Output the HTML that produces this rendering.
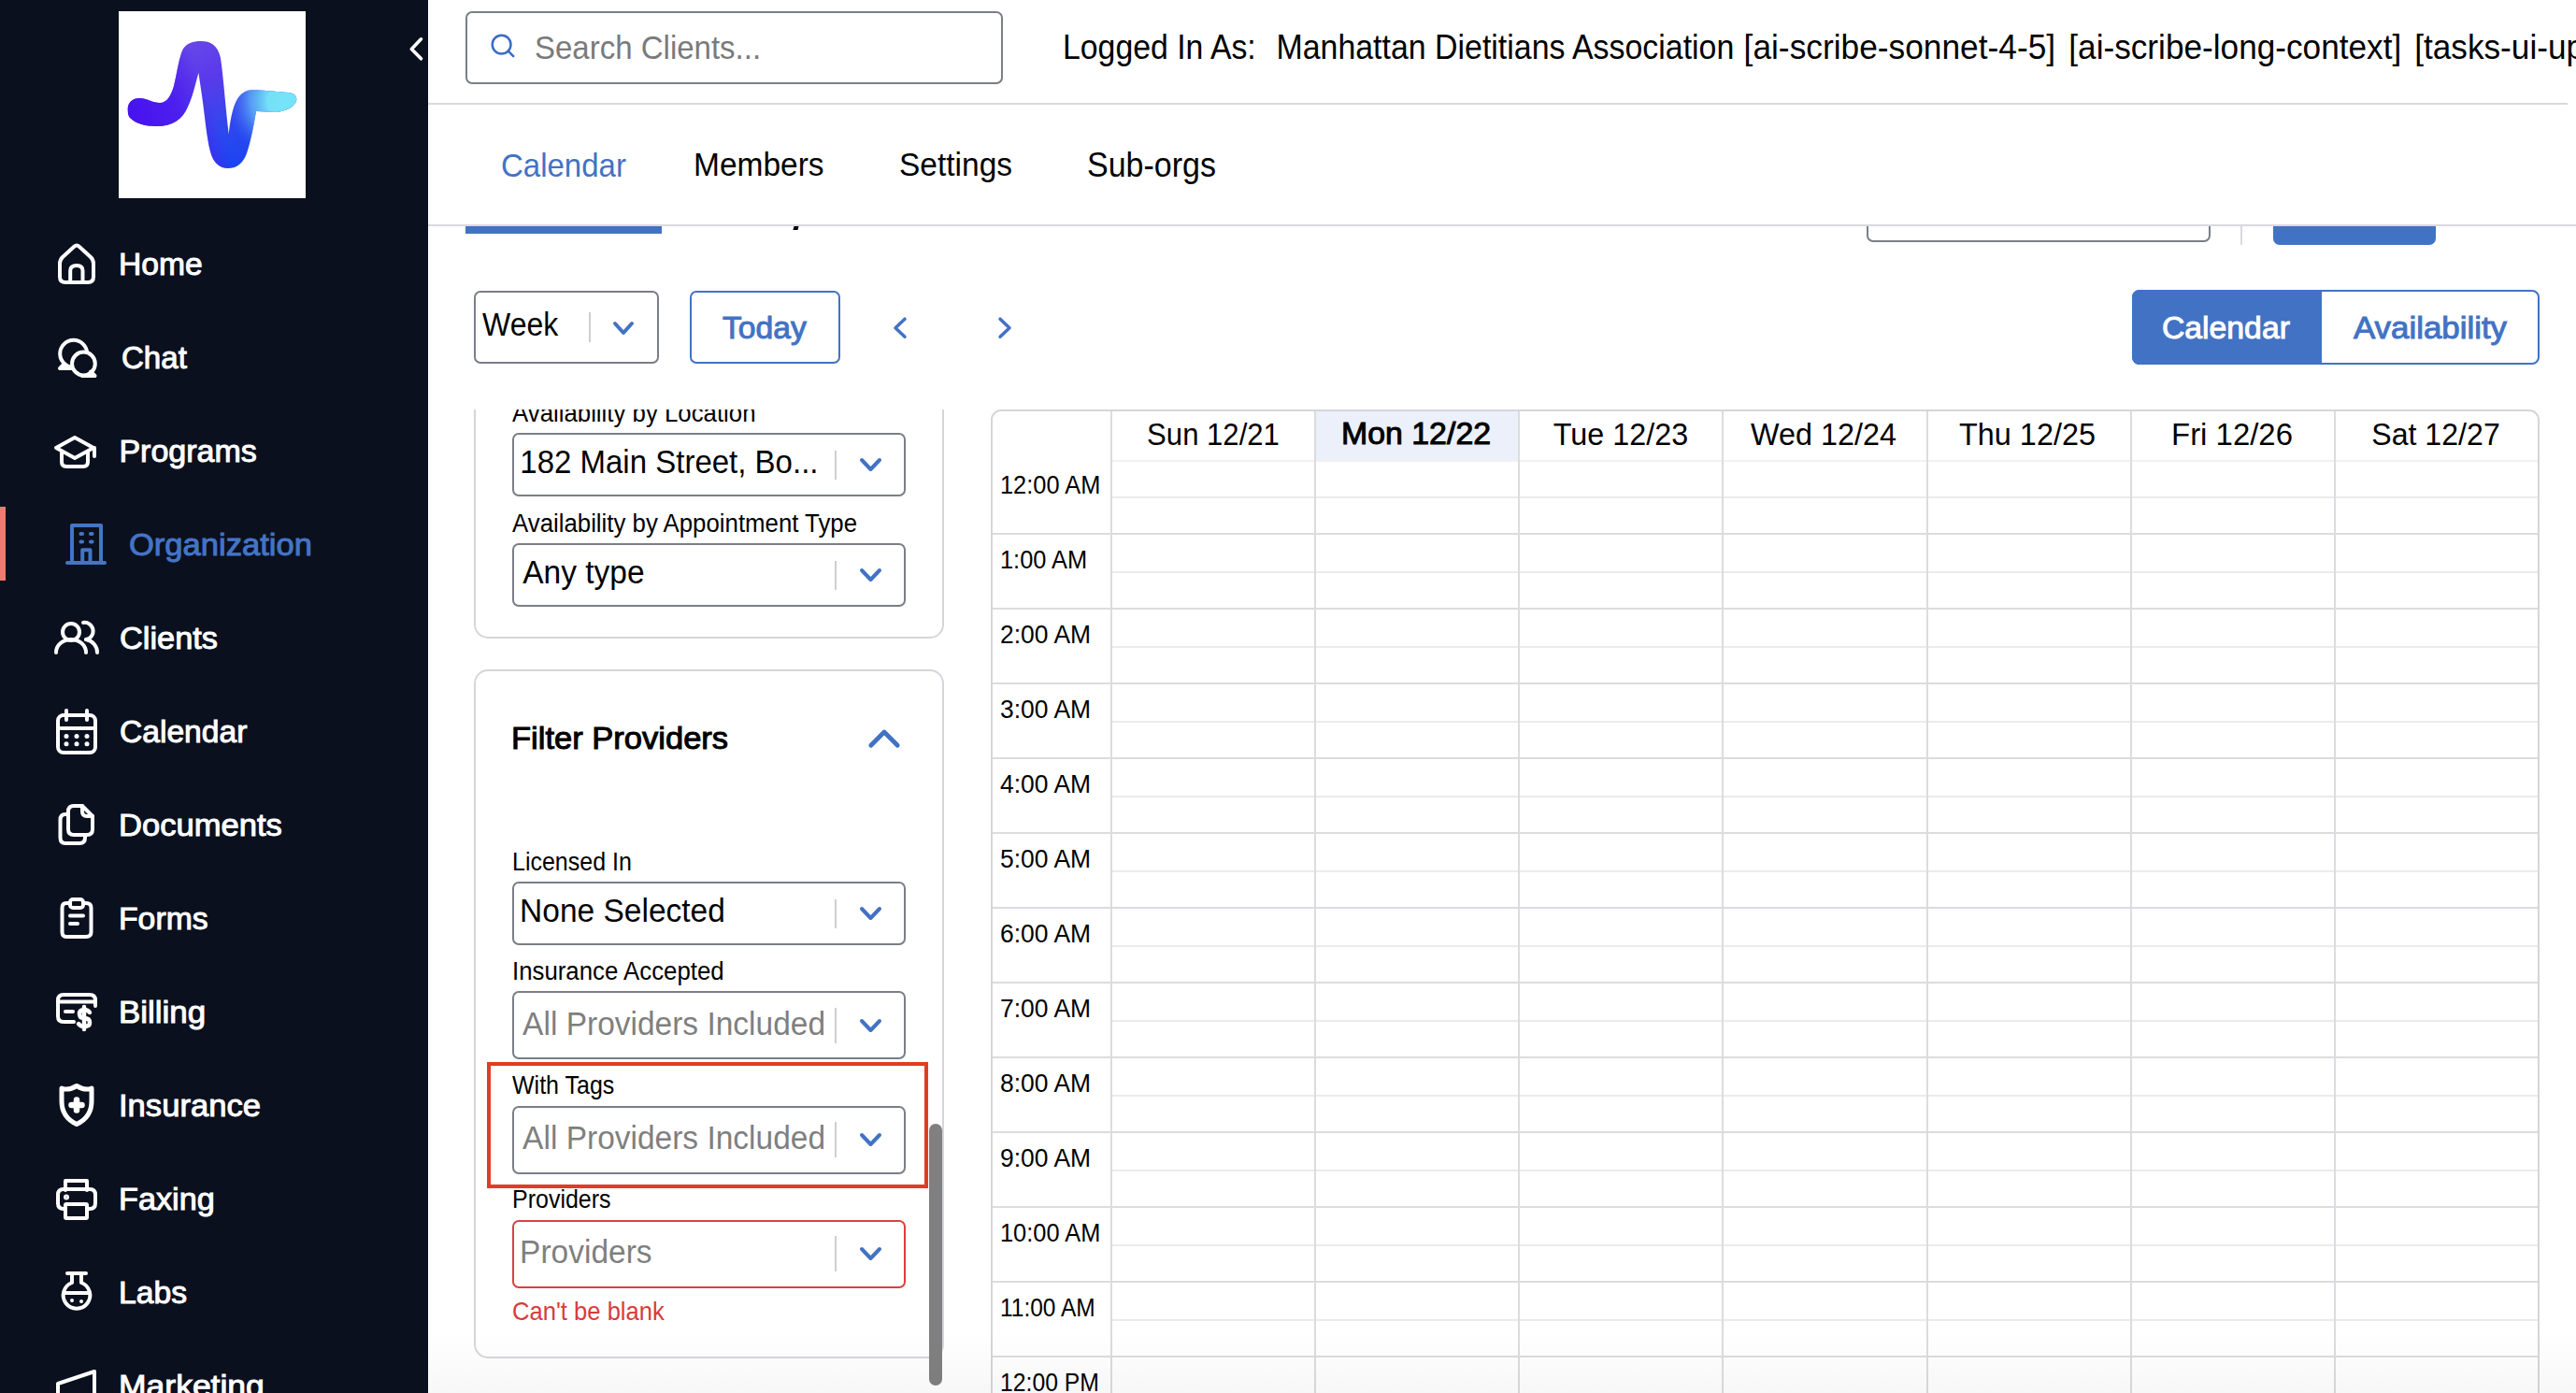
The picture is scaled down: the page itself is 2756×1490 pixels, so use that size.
<!DOCTYPE html>
<html><head><meta charset="utf-8"><style>
html,body{margin:0;padding:0;width:2756px;height:1490px;overflow:hidden;background:#fff;font-family:"Liberation Sans", sans-serif;}
.r{position:absolute;}
.t{position:absolute;line-height:0;white-space:nowrap;transform-origin:0 0;}
</style></head><body>
<div class="r" style="left:0px;top:0px;width:458px;height:1490px;background:#0a101e"></div><div class="r" style="left:127px;top:12px;width:200px;height:200px;background:#fff"></div><svg class="r" style="left:127px;top:12px" width="200" height="200" viewBox="0 0 200 200">
<defs>
<linearGradient id="lg1" gradientUnits="userSpaceOnUse" x1="60" y1="30" x2="120" y2="165">
<stop offset="0" stop-color="#6a4ae8"/><stop offset="0.35" stop-color="#5a3aea"/><stop offset="0.75" stop-color="#2d48ee"/><stop offset="1" stop-color="#1c44f0"/>
</linearGradient>
<linearGradient id="lg0" gradientUnits="userSpaceOnUse" x1="10" y1="110" x2="90" y2="80">
<stop offset="0" stop-color="#4612ee"/><stop offset="0.6" stop-color="#4c1cee" stop-opacity="0.9"/><stop offset="1" stop-color="#4c1cee" stop-opacity="0"/>
</linearGradient>
<radialGradient id="lg2" gradientUnits="userSpaceOnUse" cx="178" cy="96" r="62">
<stop offset="0" stop-color="#76e4f8"/><stop offset="0.3" stop-color="#74e0f8"/><stop offset="0.6" stop-color="#5aaaf6" stop-opacity="0.85"/><stop offset="1" stop-color="#3a6af2" stop-opacity="0"/>
</radialGradient>

</defs>
<path d="M9.8,106 C9,98 15,93 22,93 C30,93 36,98 44,98 C52,98 56,90 59,80 C62,68 64,52 68,42 C72,34 80,32 88,32 C98,32 106,36 109,50 C112,70 114,100 117.7,131 C120,110 124,96 130,90 C134,86 138,84 146,84 C158,85 172,86 182,87 C190,88 191,93 190,96 C188,102 180,107 168,108 L147,107 C144,125 141,140 137,152 C132,165 124,168 117,168 C108,168 101,162 98,150 C94,135 92,110 89,90 L85.4,66 C82,78 79,92 74,102 C68,116 58,123 40,123 C28,123 18,120 12,114 C10,111 9.8,109 9.8,106 Z" fill="url(#lg1)"/><path d="M9.8,106 C9,98 15,93 22,93 C30,93 36,98 44,98 C52,98 56,90 59,80 C62,68 64,52 68,42 C72,34 80,32 88,32 C98,32 106,36 109,50 C112,70 114,100 117.7,131 C120,110 124,96 130,90 C134,86 138,84 146,84 C158,85 172,86 182,87 C190,88 191,93 190,96 C188,102 180,107 168,108 L147,107 C144,125 141,140 137,152 C132,165 124,168 117,168 C108,168 101,162 98,150 C94,135 92,110 89,90 L85.4,66 C82,78 79,92 74,102 C68,116 58,123 40,123 C28,123 18,120 12,114 C10,111 9.8,109 9.8,106 Z" fill="url(#lg0)"/><path d="M9.8,106 C9,98 15,93 22,93 C30,93 36,98 44,98 C52,98 56,90 59,80 C62,68 64,52 68,42 C72,34 80,32 88,32 C98,32 106,36 109,50 C112,70 114,100 117.7,131 C120,110 124,96 130,90 C134,86 138,84 146,84 C158,85 172,86 182,87 C190,88 191,93 190,96 C188,102 180,107 168,108 L147,107 C144,125 141,140 137,152 C132,165 124,168 117,168 C108,168 101,162 98,150 C94,135 92,110 89,90 L85.4,66 C82,78 79,92 74,102 C68,116 58,123 40,123 C28,123 18,120 12,114 C10,111 9.8,109 9.8,106 Z" fill="url(#lg2)"/>
</svg><svg class="r" style="left:436px;top:38px" width="20" height="30" viewBox="0 0 20 30"><path d="M14.5,3.8 L4.3,14.4 L14.5,24.8" fill="none" stroke="#fff" stroke-width="3.6" stroke-linecap="round" stroke-linejoin="round"/></svg><div class="t " style="left:127.4px;top:282.2px;font-size:34px;color:#fff;font-weight:400;transform:scale(0.989,1.0);transform-origin:0 11.78px;-webkit-text-stroke:1.0px #fff;">Home</div><div class="t " style="left:130.2px;top:381.6px;font-size:34px;color:#fff;font-weight:400;transform:scale(0.972,1.0);transform-origin:0 11.78px;-webkit-text-stroke:1.0px #fff;">Chat</div><div class="t " style="left:127.4px;top:482.0px;font-size:34px;color:#fff;font-weight:400;transform:scale(1.0,1.0);transform-origin:0 11.78px;-webkit-text-stroke:1.0px #fff;">Programs</div><div class="t " style="left:138.2px;top:581.6px;font-size:34px;color:#4474c6;font-weight:400;transform:scale(1.016,1.0);transform-origin:0 11.78px;-webkit-text-stroke:1.0px #4474c6;">Organization</div><div class="t " style="left:128.2px;top:681.6px;font-size:34px;color:#fff;font-weight:400;transform:scale(1.01,1.0);transform-origin:0 11.78px;-webkit-text-stroke:1.0px #fff;">Clients</div><div class="t " style="left:128.2px;top:782.2px;font-size:34px;color:#fff;font-weight:400;transform:scale(0.988,1.0);transform-origin:0 11.78px;-webkit-text-stroke:1.0px #fff;">Calendar</div><div class="t " style="left:127.4px;top:881.6px;font-size:34px;color:#fff;font-weight:400;transform:scale(1.017,1.0);transform-origin:0 11.78px;-webkit-text-stroke:1.0px #fff;">Documents</div><div class="t " style="left:127.4px;top:981.6px;font-size:34px;color:#fff;font-weight:400;transform:scale(0.993,1.0);transform-origin:0 11.78px;-webkit-text-stroke:1.0px #fff;">Forms</div><div class="t " style="left:127.4px;top:1081.6px;font-size:34px;color:#fff;font-weight:400;transform:scale(1.027,1.0);transform-origin:0 11.78px;-webkit-text-stroke:1.0px #fff;">Billing</div><div class="t " style="left:127.4px;top:1181.6px;font-size:34px;color:#fff;font-weight:400;transform:scale(1.018,1.0);transform-origin:0 11.78px;-webkit-text-stroke:1.0px #fff;">Insurance</div><div class="t " style="left:127.4px;top:1282.2px;font-size:34px;color:#fff;font-weight:400;transform:scale(1.007,1.0);transform-origin:0 11.78px;-webkit-text-stroke:1.0px #fff;">Faxing</div><div class="t " style="left:127.4px;top:1381.6px;font-size:34px;color:#fff;font-weight:400;transform:scale(0.99,1.0);transform-origin:0 11.78px;-webkit-text-stroke:1.0px #fff;">Labs</div><div class="t " style="left:127.4px;top:1481.6px;font-size:34px;color:#fff;font-weight:400;transform:scale(1.044,1.0);transform-origin:0 11.78px;-webkit-text-stroke:1.0px #fff;">Marketing</div><div class="r" style="left:0px;top:542px;width:6px;height:79px;background:#ef7a6d"></div><svg class="r" style="left:0;top:0" width="458" height="1490" viewBox="0 0 458 1490" fill="none" stroke="#fff" stroke-width="4" stroke-linecap="round" stroke-linejoin="round">
<!-- home -->
<path d="M64,282 L64,296 Q64,302 70,302 L94,302 Q100,302 100,296 L100,282 Q100,278 97,275 L85,264 Q82,261 79,264 L67,275 Q64,278 64,282 Z"/>
<path d="M75.2,302 L75.2,289.5 Q75.2,284 82,284 Q88.5,284 88.5,289.5 L88.5,302"/>
<!-- chat -->
<circle cx="78.7" cy="378.3" r="14.5"/><path d="M69,389 L64,394 L76,394"/>
<circle cx="89.4" cy="389" r="12.4" fill="#0a101e"/><path d="M97,397.5 L101.5,402 L88,402"/>
<!-- programs -->
<path d="M60,479 L80,468 L100,479 L80,490 Z"/><path d="M66,483 L66,494 Q66,499 71,499 L89,499 Q94,499 94,494 L94,483"/><path d="M101,479 L101,488"/>
<!-- organization -->
<g stroke="#4474c6"><path d="M77,602 L77,562 L108,562 L108,602"/><path d="M72,602 L112,602"/><path d="M88.2,602 L88.2,588.2 L96.5,588.2 L96.5,602"/>
<path d="M86.5,571 L88,571 M97,571 L98.5,571 M86.5,579.5 L88,579.5 M97,579.5 L98.5,579.5" stroke-width="4.2"/></g>
<!-- clients -->
<circle cx="76" cy="676" r="9"/><path d="M60,698 A16,14 0 0 1 92,698"/><path d="M89,666 A9,9 0 0 1 92,684"/><path d="M92,684 A15,14 0 0 1 104,698"/>
<!-- calendar -->
<rect x="62" y="765" width="40" height="40" rx="6"/><path d="M62,779 L102,779 M71,760 L71,770 M93,760 L93,770"/>
<g fill="#fff" stroke="none"><circle cx="71" cy="787.5" r="2.5"/><circle cx="82" cy="787.5" r="2.5"/><circle cx="93" cy="787.5" r="2.5"/><circle cx="71" cy="795.8" r="2.5"/><circle cx="82" cy="795.8" r="2.5"/><circle cx="93" cy="795.8" r="2.5"/></g>
<!-- documents -->
<path d="M73,871 L70,871 Q64.5,871 64.5,877 L64.5,896 Q64.5,902 70,902 L85,902 Q91,902 91,896 L91,893"/>
<path d="M73,868 Q73,862 79,862 L88,862 L99,873 L99,887 Q99,893 93,893 L79,893 Q73,893 73,887 Z"/><path d="M88,862 L88,868 Q88,873 93,873 L99,873"/>
<!-- forms -->
<path d="M74,966 L71,966 Q66.5,966 66.5,971 L66.5,997 Q66.5,1002 71,1002 L92,1002 Q97.5,1002 97.5,997 L97.5,971 Q97.5,966 92,966 L89,966"/>
<rect x="75" y="962" width="14" height="9" rx="3"/><path d="M75,979.5 L89,979.5 M75,988 L83,988"/>
<!-- billing -->
<path d="M79,1093 L68,1093 Q62,1093 62,1087 L62,1070 Q62,1064 68,1064 L96,1064 Q102,1064 102,1070 L102,1076"/><path d="M62,1071.5 L102,1071.5"/><path d="M70,1082 L78,1082"/>
<path d="M96,1083 Q94,1080 90,1080 Q85,1080 85,1084.5 Q85,1089 90,1089 Q96,1089 96,1094 Q96,1098 90,1098 Q86,1098 84,1095 M90,1077 L90,1101" stroke-width="4.5"/>
<!-- insurance -->
<path d="M82,1161.5 Q73,1167 66,1164 L66,1178 Q66,1195 82,1202.5 Q98,1195 98,1178 L98,1164 Q91,1167 82,1161.5 Z" stroke-width="5"/>
<path d="M82,1176.5 L82,1187.5 M76.5,1182 L87.5,1182" stroke-width="6.5"/>
<!-- faxing -->
<path d="M70,1273 L70,1263 L93,1263 L93,1273"/><path d="M70,1293 L68,1293 Q62,1293 62,1287 L62,1278 Q62,1272 68,1272 L96,1272 Q102,1272 102,1278 L102,1287 Q102,1293 96,1293 L93,1293"/>
<rect x="70" y="1288" width="23" height="15" rx="1"/><circle cx="71" cy="1280.6" r="1" fill="#fff"/>
<!-- labs -->
<path d="M72,1362 L92,1362 M77,1362 L77,1372 A14.3,14.3 0 1 0 87,1372 L87,1362"/><path d="M69,1383 L95,1383"/>
<circle cx="77" cy="1391" r="2" fill="#fff" stroke="none"/><circle cx="87" cy="1392" r="2" fill="#fff" stroke="none"/>
<!-- marketing -->
<path d="M62,1490 L62,1480 L101,1467 L101,1490"/>
</svg><div class="r" style="left:458px;top:110px;width:2289px;height:2px;background:#d9d9de"></div><div class="r" style="left:498px;top:12px;width:575px;height:78px;border:2px solid #7b7e86;border-radius:7px;box-sizing:border-box"></div><svg class="r" style="left:520px;top:32px" width="36" height="36" viewBox="0 0 36 36" fill="none" stroke="#3a6cc6" stroke-width="2.5" stroke-linecap="round"><circle cx="16.6" cy="15.6" r="9.9"/><path d="M23.8,22.6 L29.2,28.2"/></svg><div class="t " style="left:572px;top:51.5px;font-size:33px;color:#7a7a7a;font-weight:400;transform:scale(1,1.07);transform-origin:0 11.43px;">Search Clients...</div><div class="t " style="left:1137px;top:51.2px;font-size:33.8px;color:#000;font-weight:400;transform:scale(1,1.07);transform-origin:0 11.71px;">Logged In As:</div><div class="t " style="left:1365.5px;top:51.2px;font-size:33.9px;color:#000;font-weight:400;transform:scale(1,1.07);transform-origin:0 11.75px;">Manhattan Dietitians Association</div><div class="t " style="left:1865.6px;top:50.7px;font-size:35.3px;color:#000;font-weight:400;transform:scale(1,1.07);transform-origin:0 12.23px;">[ai-scribe-sonnet-4-5]</div><div class="t " style="left:2213.3px;top:50.7px;font-size:35.2px;color:#000;font-weight:400;transform:scale(1,1.07);transform-origin:0 12.20px;">[ai-scribe-long-context]</div><div class="t " style="left:2583.2px;top:50.7px;font-size:35.2px;color:#000;font-weight:400;transform:scale(1,1.07);transform-origin:0 12.20px;">[tasks-ui-updates]</div><div class="t " style="left:536px;top:177.6px;font-size:33px;color:#4272c4;font-weight:400;transform:scale(1,1.07);transform-origin:0 11.43px;">Calendar</div><div class="t " style="left:742px;top:177.4px;font-size:33.5px;color:#000;font-weight:400;transform:scale(1,1.07);transform-origin:0 11.61px;">Members</div><div class="t " style="left:962px;top:177.4px;font-size:33.5px;color:#000;font-weight:400;transform:scale(1,1.07);transform-origin:0 11.61px;">Settings</div><div class="t " style="left:1163px;top:177.2px;font-size:34px;color:#000;font-weight:400;transform:scale(1,1.07);transform-origin:0 11.78px;">Sub-orgs</div><div class="r" style="left:458px;top:240px;width:2298px;height:2px;background:#d9d9de"></div><div class="r" style="left:458px;top:242px;width:2298px;height:60px;overflow:hidden"><div class="r" style="left:40px;top:0px;width:210px;height:8px;background:#4272c4"></div><div class="r" style="left:391px;top:0px;width:5px;height:4px;background:#000;transform:skewX(-15deg)"></div><div class="r" style="left:1539px;top:-40px;width:368px;height:57px;border:2px solid #7b7e86;border-radius:7px;box-sizing:border-box"></div><div class="r" style="left:1939px;top:0px;width:2px;height:20px;background:#d9d9de"></div><div class="r" style="left:1974px;top:-40px;width:174px;height:60px;background:#4272c4;border-radius:7px"></div></div><div class="r" style="left:507px;top:311px;width:198px;height:78px;border:2px solid #7b7e86;border-radius:7px;box-sizing:border-box"></div><div class="t " style="left:516px;top:347.7px;font-size:32px;color:#000;font-weight:400;transform:scale(1,1.07);transform-origin:0 11.09px;">Week</div><div class="r" style="left:630px;top:334px;width:2px;height:32px;background:#cfcfd2"></div><svg class="r" style="left:653px;top:341px" width="28" height="20" viewBox="0 0 28 20"><path d="M5.0,5.0 L14.0,15.0 L23.0,5.0" fill="none" stroke="#4272c4" stroke-width="4" stroke-linecap="round" stroke-linejoin="round"/></svg><div class="r" style="left:738px;top:311px;width:161px;height:78px;border:2px solid #4272c4;border-radius:7px;box-sizing:border-box"></div><div class="t " style="left:773px;top:350.0px;font-size:34px;color:#4272c4;font-weight:400;transform:scale(0.99,1.0);transform-origin:0 11.78px;-webkit-text-stroke:1.0px #4272c4;">Today</div><svg class="r" style="left:950px;top:334px" width="26" height="34" viewBox="0 0 26 34"><path d="M18,7.2 L8,16.7 L18,26.2" fill="none" stroke="#4272c4" stroke-width="3.5" stroke-linecap="round" stroke-linejoin="round"/></svg><svg class="r" style="left:1062px;top:334px" width="26" height="34" viewBox="0 0 26 34"><path d="M8,7.2 L18,16.7 L8,26.2" fill="none" stroke="#4272c4" stroke-width="3.5" stroke-linecap="round" stroke-linejoin="round"/></svg><div class="r" style="left:2281px;top:310px;width:436px;height:80px;border:2px solid #4272c4;border-radius:8px;box-sizing:border-box;overflow:hidden"></div><div class="r" style="left:2281px;top:310px;width:203px;height:80px;background:#4272c4;border-radius:8px 0 0 8px"></div><div class="t " style="left:2313.3px;top:349.9px;font-size:34px;color:#fff;font-weight:400;transform:scale(0.992,1.0);transform-origin:0 11.78px;-webkit-text-stroke:1.0px #fff;">Calendar</div><div class="t " style="left:2518px;top:349.9px;font-size:34px;color:#4272c4;font-weight:400;transform:scale(1.025,1.0);transform-origin:0 11.78px;-webkit-text-stroke:1.0px #4272c4;">Availability</div><div class="r" style="left:458px;top:438px;width:582px;height:1052px;overflow:hidden"><div class="r" style="left:49px;top:-238px;width:503px;height:483px;border:2px solid #d6d6da;border-radius:15px;box-sizing:border-box"></div><div class="t " style="left:90px;top:3.5px;font-size:25.8px;color:#000;font-weight:400;transform:scale(1,1.07);transform-origin:0 8.94px;">Availability by Location</div><div class="r" style="left:90px;top:25px;width:421px;height:68px;border:2px solid #7b7e86;border-radius:7px;box-sizing:border-box;background:#fff"></div><div class="t " style="left:98.29999999999995px;top:57.4px;font-size:33px;color:#000;font-weight:400;transform:scale(1,1.07);transform-origin:0 11.43px;white-space:nowrap">182 Main Street, Bo...</div><div class="r" style="left:435px;top:43.5px;width:2px;height:31.0px;background:#cfcfd2"></div><svg class="r" style="left:458.5px;top:49.0px" width="29" height="20" viewBox="0 0 29 20"><path d="M5.0,5.0 L14.5,15.0 L24.0,5.0" fill="none" stroke="#4272c4" stroke-width="4" stroke-linecap="round" stroke-linejoin="round"/></svg><div class="t " style="left:90px;top:121.6px;font-size:25.8px;color:#000;font-weight:400;transform:scale(1,1.07);transform-origin:0 8.94px;">Availability by Appointment Type</div><div class="r" style="left:90px;top:143px;width:421px;height:68px;border:2px solid #7b7e86;border-radius:7px;box-sizing:border-box;background:#fff"></div><div class="t " style="left:101.20000000000005px;top:175.2px;font-size:33.5px;color:#000;font-weight:400;transform:scale(1,1.07);transform-origin:0 11.61px;white-space:nowrap">Any type</div><div class="r" style="left:435px;top:161.5px;width:2px;height:31.0px;background:#cfcfd2"></div><svg class="r" style="left:458.5px;top:167.0px" width="29" height="20" viewBox="0 0 29 20"><path d="M5.0,5.0 L14.5,15.0 L24.0,5.0" fill="none" stroke="#4272c4" stroke-width="4" stroke-linecap="round" stroke-linejoin="round"/></svg><div class="r" style="left:49px;top:278px;width:503px;height:737px;border:2px solid #d6d6da;border-radius:15px;box-sizing:border-box"></div><div class="t " style="left:89.29999999999995px;top:352.1px;font-size:33px;color:#000;font-weight:400;transform:scale(1.046,1.0);transform-origin:0 11.43px;-webkit-text-stroke:1.0px #000;">Filter Providers</div><svg class="r" style="left:467px;top:337px" width="42" height="30" viewBox="0 0 42 30"><path d="M6.8,22.3 L21,8 L35.2,22.3" fill="none" stroke="#4272c4" stroke-width="4.8" stroke-linecap="round" stroke-linejoin="round"/></svg><div class="t " style="left:90px;top:483.5px;font-size:25px;color:#000;font-weight:400;transform:scale(1,1.07);transform-origin:0 8.66px;">Licensed In</div><div class="r" style="left:90px;top:505px;width:421px;height:68px;border:2px solid #7b7e86;border-radius:7px;box-sizing:border-box;background:#fff"></div><div class="t " style="left:98.10000000000002px;top:537.2px;font-size:33.5px;color:#000;font-weight:400;transform:scale(1,1.07);transform-origin:0 11.61px;white-space:nowrap">None Selected</div><div class="r" style="left:435px;top:523.5px;width:2px;height:31.0px;background:#cfcfd2"></div><svg class="r" style="left:458.5px;top:529.0px" width="29" height="20" viewBox="0 0 29 20"><path d="M5.0,5.0 L14.5,15.0 L24.0,5.0" fill="none" stroke="#4272c4" stroke-width="4" stroke-linecap="round" stroke-linejoin="round"/></svg><div class="t " style="left:90px;top:601.1px;font-size:25.8px;color:#000;font-weight:400;transform:scale(1,1.07);transform-origin:0 8.94px;">Insurance Accepted</div><div class="r" style="left:90px;top:622px;width:421px;height:73px;border:2px solid #7b7e86;border-radius:7px;box-sizing:border-box;background:#fff"></div><div class="t " style="left:101.10000000000002px;top:657.7px;font-size:33.5px;color:#7f7f7f;font-weight:400;transform:scale(1,1.07);transform-origin:0 11.61px;white-space:nowrap">All Providers Included</div><div class="r" style="left:435px;top:639.5px;width:2px;height:38.0px;background:#cfcfd2"></div><svg class="r" style="left:458.5px;top:648.5px" width="29" height="20" viewBox="0 0 29 20"><path d="M5.0,5.0 L14.5,15.0 L24.0,5.0" fill="none" stroke="#4272c4" stroke-width="4" stroke-linecap="round" stroke-linejoin="round"/></svg><div class="r" style="left:63px;top:697.5px;width:472px;height:135.0px;border:4.5px solid #e23c22;box-sizing:border-box"></div><div class="t " style="left:90px;top:722.8px;font-size:25px;color:#000;font-weight:400;transform:scale(1,1.07);transform-origin:0 8.66px;">With Tags</div><div class="r" style="left:90px;top:744.5px;width:421px;height:73.0px;border:2px solid #7b7e86;border-radius:7px;box-sizing:border-box;background:#fff"></div><div class="t " style="left:101.10000000000002px;top:780.2px;font-size:33.5px;color:#7f7f7f;font-weight:400;transform:scale(1,1.07);transform-origin:0 11.61px;white-space:nowrap">All Providers Included</div><div class="r" style="left:435px;top:762.0px;width:2px;height:38.0px;background:#cfcfd2"></div><svg class="r" style="left:458.5px;top:771.0px" width="29" height="20" viewBox="0 0 29 20"><path d="M5.0,5.0 L14.5,15.0 L24.0,5.0" fill="none" stroke="#4272c4" stroke-width="4" stroke-linecap="round" stroke-linejoin="round"/></svg><div class="t " style="left:90px;top:844.9px;font-size:25px;color:#000;font-weight:400;transform:scale(1,1.07);transform-origin:0 8.66px;">Providers</div><div class="r" style="left:90px;top:866.5px;width:421px;height:73.0px;border:2px solid #dc4040;border-radius:7px;box-sizing:border-box;background:#fff"></div><div class="t " style="left:98.10000000000002px;top:902.2px;font-size:33.5px;color:#7f7f7f;font-weight:400;transform:scale(1,1.07);transform-origin:0 11.61px;white-space:nowrap">Providers</div><div class="r" style="left:435px;top:884.0px;width:2px;height:38.0px;background:#cfcfd2"></div><svg class="r" style="left:458.5px;top:893.0px" width="29" height="20" viewBox="0 0 29 20"><path d="M5.0,5.0 L14.5,15.0 L24.0,5.0" fill="none" stroke="#4272c4" stroke-width="4" stroke-linecap="round" stroke-linejoin="round"/></svg><div class="t " style="left:90px;top:965.1px;font-size:25.6px;color:#d93b3b;font-weight:400;transform:scale(1,1.07);transform-origin:0 8.87px;">Can't be blank</div><div class="r" style="left:536px;top:764px;width:14px;height:280px;background:#808080;border-radius:7px"></div></div><div class="r" style="left:1060px;top:438px;width:1657px;height:1072px;border:2px solid #d6d6da;border-radius:11px;box-sizing:border-box;overflow:hidden"><div class="r" style="left:344.83px;top:0px;width:218.22999999999996px;height:52px;background:#ebf0fa"></div><div class="r" style="left:126.6px;top:52px;width:1528.4px;height:1.5px;background:#f1f1f2"></div><div class="r" style="left:-2px;top:130px;width:1657px;height:2px;background:#dcdcdf"></div><div class="r" style="left:126.6px;top:91px;width:1528.4px;height:2px;background:#ebebed"></div><div class="r" style="left:-2px;top:210px;width:1657px;height:2px;background:#dcdcdf"></div><div class="r" style="left:126.6px;top:171px;width:1528.4px;height:2px;background:#ebebed"></div><div class="r" style="left:-2px;top:290px;width:1657px;height:2px;background:#dcdcdf"></div><div class="r" style="left:126.6px;top:251px;width:1528.4px;height:2px;background:#ebebed"></div><div class="r" style="left:-2px;top:370px;width:1657px;height:2px;background:#dcdcdf"></div><div class="r" style="left:126.6px;top:331px;width:1528.4px;height:2px;background:#ebebed"></div><div class="r" style="left:-2px;top:450px;width:1657px;height:2px;background:#dcdcdf"></div><div class="r" style="left:126.6px;top:411px;width:1528.4px;height:2px;background:#ebebed"></div><div class="r" style="left:-2px;top:530px;width:1657px;height:2px;background:#dcdcdf"></div><div class="r" style="left:126.6px;top:491px;width:1528.4px;height:2px;background:#ebebed"></div><div class="r" style="left:-2px;top:610px;width:1657px;height:2px;background:#dcdcdf"></div><div class="r" style="left:126.6px;top:571px;width:1528.4px;height:2px;background:#ebebed"></div><div class="r" style="left:-2px;top:690px;width:1657px;height:2px;background:#dcdcdf"></div><div class="r" style="left:126.6px;top:651px;width:1528.4px;height:2px;background:#ebebed"></div><div class="r" style="left:-2px;top:770px;width:1657px;height:2px;background:#dcdcdf"></div><div class="r" style="left:126.6px;top:731px;width:1528.4px;height:2px;background:#ebebed"></div><div class="r" style="left:-2px;top:850px;width:1657px;height:2px;background:#dcdcdf"></div><div class="r" style="left:126.6px;top:811px;width:1528.4px;height:2px;background:#ebebed"></div><div class="r" style="left:-2px;top:930px;width:1657px;height:2px;background:#dcdcdf"></div><div class="r" style="left:126.6px;top:891px;width:1528.4px;height:2px;background:#ebebed"></div><div class="r" style="left:-2px;top:1010px;width:1657px;height:2px;background:#dcdcdf"></div><div class="r" style="left:126.6px;top:971px;width:1528.4px;height:2px;background:#ebebed"></div><div class="r" style="left:-2px;top:1090px;width:1657px;height:2px;background:#dcdcdf"></div><div class="r" style="left:126.6px;top:1051px;width:1528.4px;height:2px;background:#ebebed"></div><div class="r" style="left:-2px;top:1170px;width:1657px;height:2px;background:#dcdcdf"></div><div class="r" style="left:126.6px;top:1131px;width:1528.4px;height:2px;background:#ebebed"></div><div class="r" style="left:-2px;top:1250px;width:1657px;height:2px;background:#dcdcdf"></div><div class="r" style="left:126.6px;top:1211px;width:1528.4px;height:2px;background:#ebebed"></div><div class="r" style="left:-2px;top:1330px;width:1657px;height:2px;background:#dcdcdf"></div><div class="r" style="left:126.6px;top:1291px;width:1528.4px;height:2px;background:#ebebed"></div><div class="r" style="left:-2px;top:1410px;width:1657px;height:2px;background:#dcdcdf"></div><div class="r" style="left:126.6px;top:1371px;width:1528.4px;height:2px;background:#ebebed"></div><div class="r" style="left:-2px;top:1490px;width:1657px;height:2px;background:#dcdcdf"></div><div class="r" style="left:126.6px;top:1451px;width:1528.4px;height:2px;background:#ebebed"></div><div class="r" style="left:-2px;top:1570px;width:1657px;height:2px;background:#dcdcdf"></div><div class="r" style="left:126.6px;top:1531px;width:1528.4px;height:2px;background:#ebebed"></div><div class="r" style="left:-2px;top:1650px;width:1657px;height:2px;background:#dcdcdf"></div><div class="r" style="left:126.6px;top:1611px;width:1528.4px;height:2px;background:#ebebed"></div><div class="r" style="left:-2px;top:1730px;width:1657px;height:2px;background:#dcdcdf"></div><div class="r" style="left:126.6px;top:1691px;width:1528.4px;height:2px;background:#ebebed"></div><div class="r" style="left:-2px;top:1810px;width:1657px;height:2px;background:#dcdcdf"></div><div class="r" style="left:126.6px;top:1771px;width:1528.4px;height:2px;background:#ebebed"></div><div class="r" style="left:-2px;top:1890px;width:1657px;height:2px;background:#dcdcdf"></div><div class="r" style="left:126.6px;top:1851px;width:1528.4px;height:2px;background:#ebebed"></div><div class="r" style="left:-2px;top:1970px;width:1657px;height:2px;background:#dcdcdf"></div><div class="r" style="left:126.6px;top:1931px;width:1528.4px;height:2px;background:#ebebed"></div><div class="r" style="left:125.6px;top:-2px;width:2.0px;height:1062px;background:#dcdcdf"></div><div class="r" style="left:343.83px;top:-2px;width:2.0px;height:1062px;background:#dcdcdf"></div><div class="r" style="left:562.06px;top:-2px;width:2.0px;height:1062px;background:#dcdcdf"></div><div class="r" style="left:780.29px;top:-2px;width:2.0px;height:1062px;background:#dcdcdf"></div><div class="r" style="left:998.51px;top:-2px;width:2.0px;height:1062px;background:#dcdcdf"></div><div class="r" style="left:1216.74px;top:-2px;width:2.0px;height:1062px;background:#dcdcdf"></div><div class="r" style="left:1434.97px;top:-2px;width:2.0px;height:1062px;background:#dcdcdf"></div><div class="r" style="left:1653.2px;top:-2px;width:2.0px;height:1062px;background:#dcdcdf"></div><div class="t" style="left:86.3px;width:300px;text-align:center;top:25.0px;font-size:31.5px;transform:scale(0.987,1.08);transform-origin:150px 10.91px;font-weight:400;color:#000">Sun 12/21</div><div class="t" style="left:302.5px;width:300px;text-align:center;top:24.3px;font-size:33.5px;transform:scale(1.012,1.0);transform-origin:150px 11.61px;font-weight:400;-webkit-text-stroke:1px #000;color:#000">Mon 12/22</div><div class="t" style="left:521.9px;width:300px;text-align:center;top:25.0px;font-size:31.5px;transform:scale(1.026,1.08);transform-origin:150px 10.91px;font-weight:400;color:#000">Tue 12/23</div><div class="t" style="left:739.2px;width:300px;text-align:center;top:25.0px;font-size:31.5px;transform:scale(1.027,1.08);transform-origin:150px 10.91px;font-weight:400;color:#000">Wed 12/24</div><div class="t" style="left:957.3px;width:300px;text-align:center;top:25.0px;font-size:31.5px;transform:scale(1.028,1.08);transform-origin:150px 10.91px;font-weight:400;color:#000">Thu 12/25</div><div class="t" style="left:1175.5px;width:300px;text-align:center;top:25.0px;font-size:31.5px;transform:scale(1.045,1.08);transform-origin:150px 10.91px;font-weight:400;color:#000">Fri 12/26</div><div class="t" style="left:1393.8px;width:300px;text-align:center;top:25.0px;font-size:31.5px;transform:scale(1.02,1.08);transform-origin:150px 10.91px;font-weight:400;color:#000">Sat 12/27</div><div class="t " style="left:8px;top:78.8px;font-size:25.4px;color:#000;font-weight:400;transform:scale(1.0,1.07);transform-origin:0 8.80px;">12:00 AM</div><div class="t " style="left:8px;top:158.8px;font-size:25.4px;color:#000;font-weight:400;transform:scale(1.0,1.07);transform-origin:0 8.80px;">1:00 AM</div><div class="t " style="left:8px;top:238.8px;font-size:25.4px;color:#000;font-weight:400;transform:scale(1.042,1.07);transform-origin:0 8.80px;">2:00 AM</div><div class="t " style="left:8px;top:318.8px;font-size:25.4px;color:#000;font-weight:400;transform:scale(1.042,1.07);transform-origin:0 8.80px;">3:00 AM</div><div class="t " style="left:8px;top:398.8px;font-size:25.4px;color:#000;font-weight:400;transform:scale(1.042,1.07);transform-origin:0 8.80px;">4:00 AM</div><div class="t " style="left:8px;top:478.8px;font-size:25.4px;color:#000;font-weight:400;transform:scale(1.042,1.07);transform-origin:0 8.80px;">5:00 AM</div><div class="t " style="left:8px;top:558.8px;font-size:25.4px;color:#000;font-weight:400;transform:scale(1.042,1.07);transform-origin:0 8.80px;">6:00 AM</div><div class="t " style="left:8px;top:638.8px;font-size:25.4px;color:#000;font-weight:400;transform:scale(1.042,1.07);transform-origin:0 8.80px;">7:00 AM</div><div class="t " style="left:8px;top:718.8px;font-size:25.4px;color:#000;font-weight:400;transform:scale(1.042,1.07);transform-origin:0 8.80px;">8:00 AM</div><div class="t " style="left:8px;top:798.8px;font-size:25.4px;color:#000;font-weight:400;transform:scale(1.042,1.07);transform-origin:0 8.80px;">9:00 AM</div><div class="t " style="left:8px;top:878.8px;font-size:25.4px;color:#000;font-weight:400;transform:scale(1.0,1.07);transform-origin:0 8.80px;">10:00 AM</div><div class="t " style="left:8px;top:958.8px;font-size:25.4px;color:#000;font-weight:400;transform:scale(0.965,1.07);transform-origin:0 8.80px;">11:00 AM</div><div class="t " style="left:8px;top:1038.8px;font-size:25.4px;color:#000;font-weight:400;transform:scale(0.975,1.07);transform-origin:0 8.80px;">12:00 PM</div><div class="t " style="left:8px;top:1118.8px;font-size:25.4px;color:#000;font-weight:400;transform:scale(1.0,1.07);transform-origin:0 8.80px;">1:00 PM</div><div class="t " style="left:8px;top:1198.8px;font-size:25.4px;color:#000;font-weight:400;transform:scale(1.042,1.07);transform-origin:0 8.80px;">2:00 PM</div><div class="t " style="left:8px;top:1278.8px;font-size:25.4px;color:#000;font-weight:400;transform:scale(1.042,1.07);transform-origin:0 8.80px;">3:00 PM</div><div class="t " style="left:8px;top:1358.8px;font-size:25.4px;color:#000;font-weight:400;transform:scale(1.042,1.07);transform-origin:0 8.80px;">4:00 PM</div><div class="t " style="left:8px;top:1438.8px;font-size:25.4px;color:#000;font-weight:400;transform:scale(1.042,1.07);transform-origin:0 8.80px;">5:00 PM</div><div class="t " style="left:8px;top:1518.8px;font-size:25.4px;color:#000;font-weight:400;transform:scale(1.042,1.07);transform-origin:0 8.80px;">6:00 PM</div><div class="t " style="left:8px;top:1598.8px;font-size:25.4px;color:#000;font-weight:400;transform:scale(1.042,1.07);transform-origin:0 8.80px;">7:00 PM</div><div class="t " style="left:8px;top:1678.8px;font-size:25.4px;color:#000;font-weight:400;transform:scale(1.042,1.07);transform-origin:0 8.80px;">8:00 PM</div><div class="t " style="left:8px;top:1758.8px;font-size:25.4px;color:#000;font-weight:400;transform:scale(1.042,1.07);transform-origin:0 8.80px;">9:00 PM</div><div class="t " style="left:8px;top:1838.8px;font-size:25.4px;color:#000;font-weight:400;transform:scale(1.0,1.07);transform-origin:0 8.80px;">10:00 PM</div><div class="t " style="left:8px;top:1918.8px;font-size:25.4px;color:#000;font-weight:400;transform:scale(0.965,1.07);transform-origin:0 8.80px;">11:00 PM</div></div><div class="r" style="left:458px;top:1425px;width:2298px;height:65px;background:linear-gradient(to bottom, rgba(0,0,0,0), rgba(0,0,0,0.03))"></div>
</body></html>
